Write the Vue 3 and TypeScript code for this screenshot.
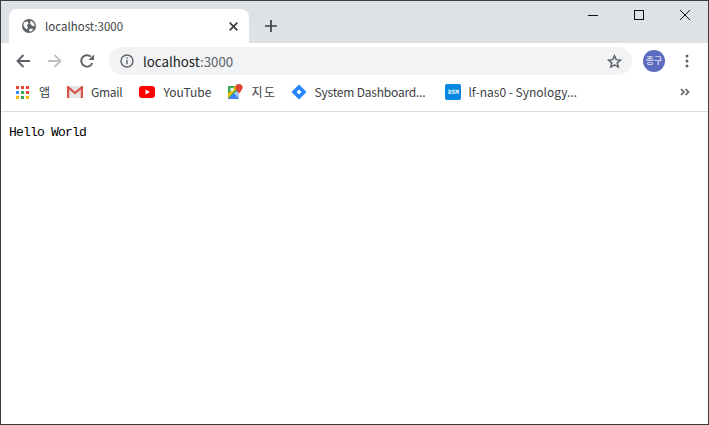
<script setup lang="ts">
const dots = ['#ea4335', '#ea4335', '#ea4335', '#4285f4', '#34a853', '#ea4335', '#fbbc04', '#34a853', '#fbbc04']
</script>

<template>
  <div class="window">
    <div class="tabstrip">
      <div class="tab">
        <svg class="globe" width="14" height="14" viewBox="0 0 16 16">
          <circle cx="8" cy="8" r="8" fill="#5f6368" />
          <path d="M2 4 6 2.500 7.500 5 5.500 7.500 7 10 5 12 1.800 8ZM10.500 2l3 2.500 1 3.500-2.500 0-2-2-1-2ZM8.500 11h3.500l.5 1.500-2.500 2-2-1.500Z" fill="#fff" />
        </svg>
        <span class="tab-title">localhost:3000</span>
        <svg class="tab-close" width="9" height="9" viewBox="0 0 9 9">
          <path d="M.7.7l7.600 7.600M8.300.7.700 8.300" stroke="#3c4043" stroke-width="1.700" />
        </svg>
      </div>
      <svg class="new-tab" width="12" height="12" viewBox="0 0 12 12">
        <path d="M6 0v12M0 6h12" stroke="#3c4043" stroke-width="1.700" />
      </svg>
      <div class="win-controls">
        <svg width="10" height="10" viewBox="0 0 10 10"><path d="M0 5.500h10" stroke="#111" /></svg>
        <svg width="10" height="10" viewBox="0 0 10 10"><rect x=".5" y=".5" width="9" height="9" fill="none" stroke="#111" /></svg>
        <svg width="10" height="10" viewBox="0 0 10 10"><path d="M0 0l10 10M10 0 0 10" stroke="#111" /></svg>
      </div>
    </div>

    <div class="toolbar">
      <svg width="14" height="14" viewBox="0 0 14 14"><path d="M14 7H2M7.500 1 1.500 7l6 6" fill="none" stroke="#5f6368" stroke-width="1.900" /></svg>
      <svg width="14" height="14" viewBox="0 0 14 14"><path d="M0 7h12M6.500 1l6 6-6 6" fill="none" stroke="#bdc1c6" stroke-width="1.900" /></svg>
      <svg width="14" height="14" viewBox="0 0 14 14"><path d="M12.300 9A5.700 5.700 0 1 1 10.800 2.700" fill="none" stroke="#5f6368" stroke-width="1.900" /><path d="M14 .5V6H8.500Z" fill="#5f6368" /></svg>
      <div class="omnibox">
        <svg width="14" height="14" viewBox="0 0 14 14">
          <circle cx="7" cy="7" r="6" fill="none" stroke="#5f6368" stroke-width="1.400" />
          <path d="M7 6v4.200M7 3.600v1.400" stroke="#5f6368" stroke-width="1.400" />
        </svg>
        <span class="url"><span class="host">localhost</span><span class="port">:3000</span></span>
        <svg class="star" width="15" height="15" viewBox="0 0 16 16">
          <path d="M8 1.800 9.800 6l4.600.4-3.500 3 1.100 4.500L8 11.500l-4 2.400 1.100-4.500-3.500-3L6.200 6Z" fill="none" stroke="#5f6368" stroke-width="1.600" />
        </svg>
      </div>
      <div class="avatar">종구</div>
      <svg class="menu" width="4" height="14" viewBox="0 0 4 14">
        <circle cx="2" cy="2" r="1.500" fill="#5f6368" /><circle cx="2" cy="7" r="1.500" fill="#5f6368" /><circle cx="2" cy="12" r="1.500" fill="#5f6368" />
      </svg>
    </div>

    <div class="bookmarks">
      <div class="bm bm-apps">
        <div class="apps-grid"><i v-for="(c, i) in dots" :key="i" :style="{ background: c }" /></div>
        <span>앱</span>
      </div>
      <div class="bm bm-gmail">
        <svg width="16" height="12" viewBox="0 0 16 12">
          <path d="M1 0h14v12H1Z" fill="#e6e6e6" />
          <path d="M1.100 12V1.200L8 7l6.900-5.800V12" fill="none" stroke="#d9534a" stroke-width="2.200" />
        </svg>
        <span class="gmail-text">Gmail</span>
      </div>
      <div class="bm bm-yt">
        <svg width="16" height="12" viewBox="0 0 16 12">
          <rect width="16" height="12" rx="3" fill="#f00" />
          <path d="M6.500 3.500v5L11 6Z" fill="#fff" />
        </svg>
        <span>YouTube</span>
      </div>
      <div class="bm bm-maps">
        <svg width="15" height="16" viewBox="0 0 15 16">
          <path d="M0 2h11v13H0Z" fill="#34a853" />
          <path d="M0 10 7 2h4L0 14Z" fill="#fbbc04" />
          <path d="M0 15 6 9l5 6Z" fill="#4285f4" />
          <path d="M6 9l5-3v9Z" fill="#a8c7fa" />
          <circle cx="4" cy="5.500" r="1.800" fill="#e8f0fe" />
          <path d="M11 0a3.600 3.600 0 0 1 3.600 3.600C14.600 6 11 9.500 11 9.500S7.400 6 7.400 3.600A3.600 3.600 0 0 1 11 0Z" fill="#db4437" />
        </svg>
        <span class="maps-text">지도</span>
      </div>
      <div class="bm bm-jira">
        <svg width="16" height="16" viewBox="0 0 16 16">
          <path d="M8 .5 15.500 8 8 15.500.5 8Z" fill="#2684ff" />
          <path d="M8 5.500 10.500 8 8 10.500 5.500 8Z" fill="#fff" />
        </svg>
        <span class="jira-text">System Dashboard...</span>
      </div>
      <div class="bm bm-dsm">
        <div class="dsm">DSM</div>
        <span>lf-nas0 - Synology...</span>
      </div>
      <svg class="more" width="10" height="8" viewBox="0 0 10 8">
        <path d="M1 1l3 3-3 3M5.500 1l3 3-3 3" fill="none" stroke="#5f6368" stroke-width="1.700" />
      </svg>
    </div>

    <main class="page">Hello World</main>
  </div>
</template>

<style scoped>
.window {
  box-sizing: border-box;
  width: 709px;
  height: 425px;
  border: 1px solid #3c3c3c;
  background: #fff;
  display: flex;
  flex-direction: column;
  overflow: hidden;
  font-family: "Noto Sans CJK KR", "Noto Sans", sans-serif;
}

.tabstrip {
  height: 42px;
  flex: none;
  background: #dee1e6;
  display: flex;
  align-items: flex-end;
  position: relative;
}

.tab {
  box-sizing: border-box;
  width: 240px;
  height: 34px;
  margin-left: 8px;
  padding: 0 11px 0 13px;
  background: #fff;
  border-radius: 8px 8px 0 0;
  display: flex;
  align-items: center;
}

.tab-title {
  margin-left: 9px;
  flex: 1;
  font-size: 11.500px;
  color: #3c4043;
}

.new-tab {
  margin: 0 0 11px 16px;
}

.win-controls {
  position: absolute;
  top: 9px;
  right: 18px;
  display: flex;
  gap: 36px;
}

.win-controls svg {
  display: block;
}

.toolbar {
  height: 36px;
  flex: none;
  display: flex;
  align-items: center;
  padding-left: 15px;
}

.toolbar > svg:nth-child(2),
.toolbar > svg:nth-child(3) {
  margin-left: 18px;
}

.omnibox {
  box-sizing: border-box;
  width: 523px;
  height: 28px;
  margin-left: 15px;
  padding: 0 10px 0 11px;
  border-radius: 14px;
  background: #f1f3f4;
  display: flex;
  align-items: center;
}

.url {
  margin-left: 9px;
  flex: 1;
  font-size: 13.300px;
}

.host {
  color: #202124;
}

.port {
  color: #5f6368;
}

.avatar {
  width: 22px;
  height: 22px;
  margin-left: 11px;
  border-radius: 50%;
  background: #5c6bc0;
  color: #fff;
  font-size: 9px;
  line-height: 22px;
  text-align: center;
}

.menu {
  margin-left: 20px;
}

.bookmarks {
  height: 33px;
  flex: none;
  box-sizing: border-box;
  border-bottom: 1px solid #d9dadc;
  display: flex;
  align-items: center;
  padding: 0 0 6px 15px;
  font-size: 12px;
  color: #3c4043;
}

.bm {
  display: flex;
  align-items: center;
  gap: 8px;
  white-space: nowrap;
}

.bm span {
  margin-bottom: 2px;
}

.bm-apps {
  gap: 10px;
}

.bm-gmail {
  margin-left: 17px;
}

.bm-yt,
.bm-maps {
  margin-left: 17px;
}

.bm-jira {
  margin-left: 14px;
}

.bm-dsm {
  margin-left: 20px;
  gap: 7px;
}

.gmail-text {
  letter-spacing: -0.3px;
}

.maps-text {
  letter-spacing: 1.500px;
}

.jira-text {
  letter-spacing: -0.2px;
}

.apps-grid {
  display: grid;
  grid-template-columns: repeat(3, 3px);
  grid-auto-rows: 3px;
  gap: 2px;
}

.apps-grid i {
  display: block;
}

.dsm {
  width: 16px;
  height: 16px;
  border-radius: 2px;
  background: #0086e0;
  color: #fff;
  font-family: "DejaVu Sans Mono", monospace;
  font-size: 6px;
  font-weight: 700;
  line-height: 16px;
  text-align: center;
}

.more {
  margin-left: auto;
  margin-right: 18px;
}

.page {
  flex: 1;
  padding: 13px 8px;
  font-family: "Liberation Mono", monospace;
  font-size: 13px;
  letter-spacing: -0.8px;
  line-height: 16px;
  color: #000;
}
</style>
